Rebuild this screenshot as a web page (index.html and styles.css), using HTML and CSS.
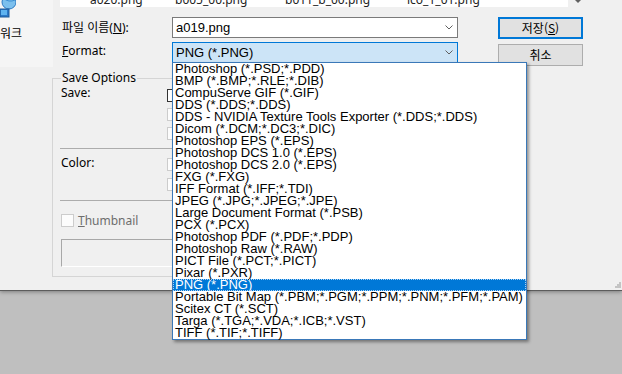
FILE: index.html
```html
<!DOCTYPE html>
<html lang="ko">
<head>
  <meta charset="UTF-8">
  <title>다른 이름으로 저장</title>
  <link rel="stylesheet" href="styles.css">
</head>
<body>

  <div class="dialog">
    <div class="top">
      <div class="nav">
        <svg class="net-icon" width="16" height="20" viewBox="0 0 16 20">
          <circle cx="9" cy="2" r="7" fill="#7cc0ee" stroke="#2f7cc4" stroke-width="1"/>
          <path d="M3 -2 Q9 3 15 0" fill="none" stroke="#3d8fd3" stroke-width="1"/>
          <rect x="0" y="9" width="9" height="8" fill="#2a78c8" stroke="#1d5a99" stroke-width="1"/>
          <rect x="1" y="10" width="6" height="5" fill="#5eb3f0"/>
        </svg>
        <span class="nav-label">워크</span>
      </div>

      <div class="form">
        <div class="files-row">
          <div class="files">
            <span class="f1">a020.png</span>
            <span class="f2">b005_00.png</span>
            <span class="f3">b011_b_00.png</span>
            <span class="f4">ico_1_01.png</span>
          </div>
          <span class="scroll-arrow"></span>
        </div>

        <div class="field">
          <label class="lbl">파일 이름(<u>N</u>):</label>
          <div class="combo">
            <span>a019.png</span>
            <svg class="chev" width="8" height="5" viewBox="0 0 8 5"><polyline points="0.5,0.5 4,4 7.5,0.5" fill="none" stroke="#606060" stroke-width="1"/></svg>
          </div>
          <button class="btn btn-default">저장(<u>S</u>)</button>
        </div>

        <div class="field field-format">
          <label class="lbl lbl-format"><u>F</u>ormat:</label>
          <div class="combo combo-open">
            <span>PNG (*.PNG)</span>
            <svg class="chev" width="8" height="5" viewBox="0 0 8 5"><polyline points="0.5,0.5 4,4 7.5,0.5" fill="none" stroke="#606060" stroke-width="1"/></svg>
          </div>
          <button class="btn btn-cancel">취소</button>
        </div>
      </div>
    </div>

    <fieldset class="options">
      <legend>Save Options</legend>

      <div class="opt-group first">
        <span class="opt-label">Save:</span>
        <div class="checks">
          <span class="chk"></span>
          <span class="chk off"></span>
          <span class="chk off"></span>
        </div>
      </div>
      <div class="sep"></div>

      <div class="opt-group second">
        <span class="opt-label color-label">Color:</span>
        <div class="checks wide">
          <span class="chk off"></span>
          <span class="chk off"></span>
        </div>
      </div>
      <div class="sep sep2"></div>

      <div class="thumb">
        <span class="chk off"></span>
        <span class="thumb-text"><u>T</u>humbnail</span>
      </div>
      <div class="sunken"></div>
    </fieldset>

    <ul class="dropdown">
      <li>Photoshop (*.PSD;*.PDD)</li>
      <li>BMP (*.BMP;*.RLE;*.DIB)</li>
      <li>CompuServe GIF (*.GIF)</li>
      <li>DDS (*.DDS;*.DDS)</li>
      <li>DDS - NVIDIA Texture Tools Exporter (*.DDS;*.DDS)</li>
      <li>Dicom (*.DCM;*.DC3;*.DIC)</li>
      <li>Photoshop EPS (*.EPS)</li>
      <li>Photoshop DCS 1.0 (*.EPS)</li>
      <li>Photoshop DCS 2.0 (*.EPS)</li>
      <li>FXG (*.FXG)</li>
      <li>IFF Format (*.IFF;*.TDI)</li>
      <li>JPEG (*.JPG;*.JPEG;*.JPE)</li>
      <li>Large Document Format (*.PSB)</li>
      <li>PCX (*.PCX)</li>
      <li>Photoshop PDF (*.PDF;*.PDP)</li>
      <li>Photoshop Raw (*.RAW)</li>
      <li>PICT File (*.PCT;*.PICT)</li>
      <li>Pixar (*.PXR)</li>
      <li class="selected">PNG (*.PNG)</li>
      <li>Portable Bit Map (*.PBM;*.PGM;*.PPM;*.PNM;*.PFM;*.PAM)</li>
      <li>Scitex CT (*.SCT)</li>
      <li>Targa (*.TGA;*.VDA;*.ICB;*.VST)</li>
      <li>TIFF (*.TIF;*.TIFF)</li>
    </ul>

    <svg class="grip" width="6" height="6" viewBox="0 0 6 6">
      <rect x="4" y="0" width="2" height="2" fill="#c4c4c4"/>
      <rect x="2" y="2" width="2" height="2" fill="#c4c4c4"/>
      <rect x="4" y="2" width="2" height="2" fill="#c4c4c4"/>
      <rect x="0" y="4" width="2" height="2" fill="#c4c4c4"/>
      <rect x="2" y="4" width="2" height="2" fill="#c4c4c4"/>
      <rect x="4" y="4" width="2" height="2" fill="#c4c4c4"/>
    </svg>
  </div>

</body>
</html>
```

FILE: styles.css
```css
html {
  background: #bfbfbf;
}

body {
  margin: 0;
  height: 374px;
  background: #bfbfbf;
  font-family: "Noto Sans", "Noto Sans CJK KR", sans-serif;
  font-size: 12px;
  color: #000;
}

.dialog {
  position: relative;
  height: 290px;
  background: #f0f0f0;
  border-bottom: 1px solid #5c5c5c;
  box-shadow: 0 1px 4px rgba(0, 0, 0, 0.35);
  display: flex;
  flex-direction: column;
}

.top {
  display: flex;
  height: 67px;
}

.nav {
  width: 53px;
  background: #f5f5f5;
}

.net-icon {
  display: block;
}

.nav-label {
  display: block;
  margin-top: 6px;
  line-height: 14px;
  font-family: "Noto Sans CJK KR", sans-serif;
}

.form {
  flex: 1;
  padding-left: 9px;
}

.files-row {
  display: flex;
  height: 7px;
}

.files {
  margin-left: -2px;
  width: 508px;
  height: 7px;
  overflow: hidden;
  background: #fff;
  display: flex;
  padding-left: 30px;
  box-sizing: border-box;
}

.files span {
  flex: none;
  margin-top: -6px;
  line-height: 12px;
  white-space: nowrap;
  color: #222;
}

.files .f1 { width: 85px; }
.files .f2 { width: 110px; }
.files .f3 { width: 122px; }

.scroll-arrow {
  margin-left: 7px;
  width: 0;
  height: 0;
  border-left: 3px solid transparent;
  border-right: 3px solid transparent;
  border-top: 3px solid #606060;
}

.field {
  display: flex;
  align-items: flex-start;
  height: 22px;
  margin-top: 10px;
}

.field-format {
  height: 24px;
  margin-top: 3px;
}

.lbl {
  width: 110px;
  line-height: 21px;
}

.lbl-format {
  margin-top: -2px;
}

.combo {
  width: 286px;
  height: 21px;
  box-sizing: border-box;
  border: 1px solid #7a7a7a;
  background: #fff;
  display: flex;
  align-items: center;
  justify-content: space-between;
  padding: 0 4px 0 3px;
  font: 13px "Liberation Sans", Arial, sans-serif;
}

.combo-open {
  background: #cce4f7;
  border-color: #0078d7;
}

.chev {
  display: block;
}

.btn {
  margin-left: 40px;
  width: 85px;
  height: 22px;
  box-sizing: border-box;
  padding: 0;
  border: 1px solid #adadad;
  background: #e1e1e1;
  font: 12px "Noto Sans CJK KR", sans-serif;
  line-height: 18px;
  color: #000;
}

.btn-default {
  border: 2px solid #0078d7;
}

.btn-cancel {
  margin-top: 2px;
}

/* save options group */
.options {
  margin: 4px 0 0 52px;
  padding: 0 0 9px 8px;
  width: 430px;
  border: 1px solid #d5d5d5;
  min-width: 0;
}

.options legend {
  padding: 0 1px;
  line-height: 14px;
}

.opt-group {
  display: grid;
  grid-template-columns: 106px 13px;
  align-items: start;
}

.opt-group.first {
  padding-top: 4px;
}

.opt-group.second {
  padding-top: 9px;
}

.opt-label {
  line-height: 13px;
  margin-top: -3px;
}

.color-label {
  margin-top: -2px;
}

.checks {
  display: flex;
  flex-direction: column;
  gap: 6px;
}

.checks.wide {
  gap: 7px;
}

.chk {
  display: block;
  width: 13px;
  height: 13px;
  box-sizing: border-box;
  border: 1px solid #333;
  background: #fff;
}

.chk.off {
  border-color: #cccccc;
  background: #fcfcfc;
}

.sep {
  height: 1px;
  margin: 8px 0 0 -1px;
  background: #acacac;
}

.sep2 {
  margin-top: 9px;
}

.thumb {
  display: flex;
  align-items: center;
  gap: 4px;
  margin-top: 13px;
  height: 13px;
}

.thumb-text {
  color: #6d6d6d;
  line-height: 13px;
}

.sunken {
  margin-top: 12px;
  height: 28px;
  box-sizing: border-box;
  border: 1px solid;
  border-color: #a8a8a8 #fff #fff #a8a8a8;
}

/* opened format list */
.dropdown {
  position: absolute;
  left: 172px;
  top: 62px;
  z-index: 2;
  width: 353px;
  margin: 0;
  padding: 0;
  list-style: none;
  background: #fff;
  border: 1px solid #3a78b8;
  box-shadow: 2px 2px 3px rgba(0, 0, 0, 0.4);
  font: 13px "Liberation Sans", Arial, sans-serif;
}

.dropdown li {
  height: 12px;
  line-height: 12px;
  padding-left: 2px;
  white-space: nowrap;
}

.dropdown li.selected {
  background: #0078d7;
  color: #fff;
  outline: 1px dotted #a8d0f4;
  outline-offset: -1px;
}

.grip {
  position: absolute;
  right: 1px;
  bottom: 2px;
}
```
